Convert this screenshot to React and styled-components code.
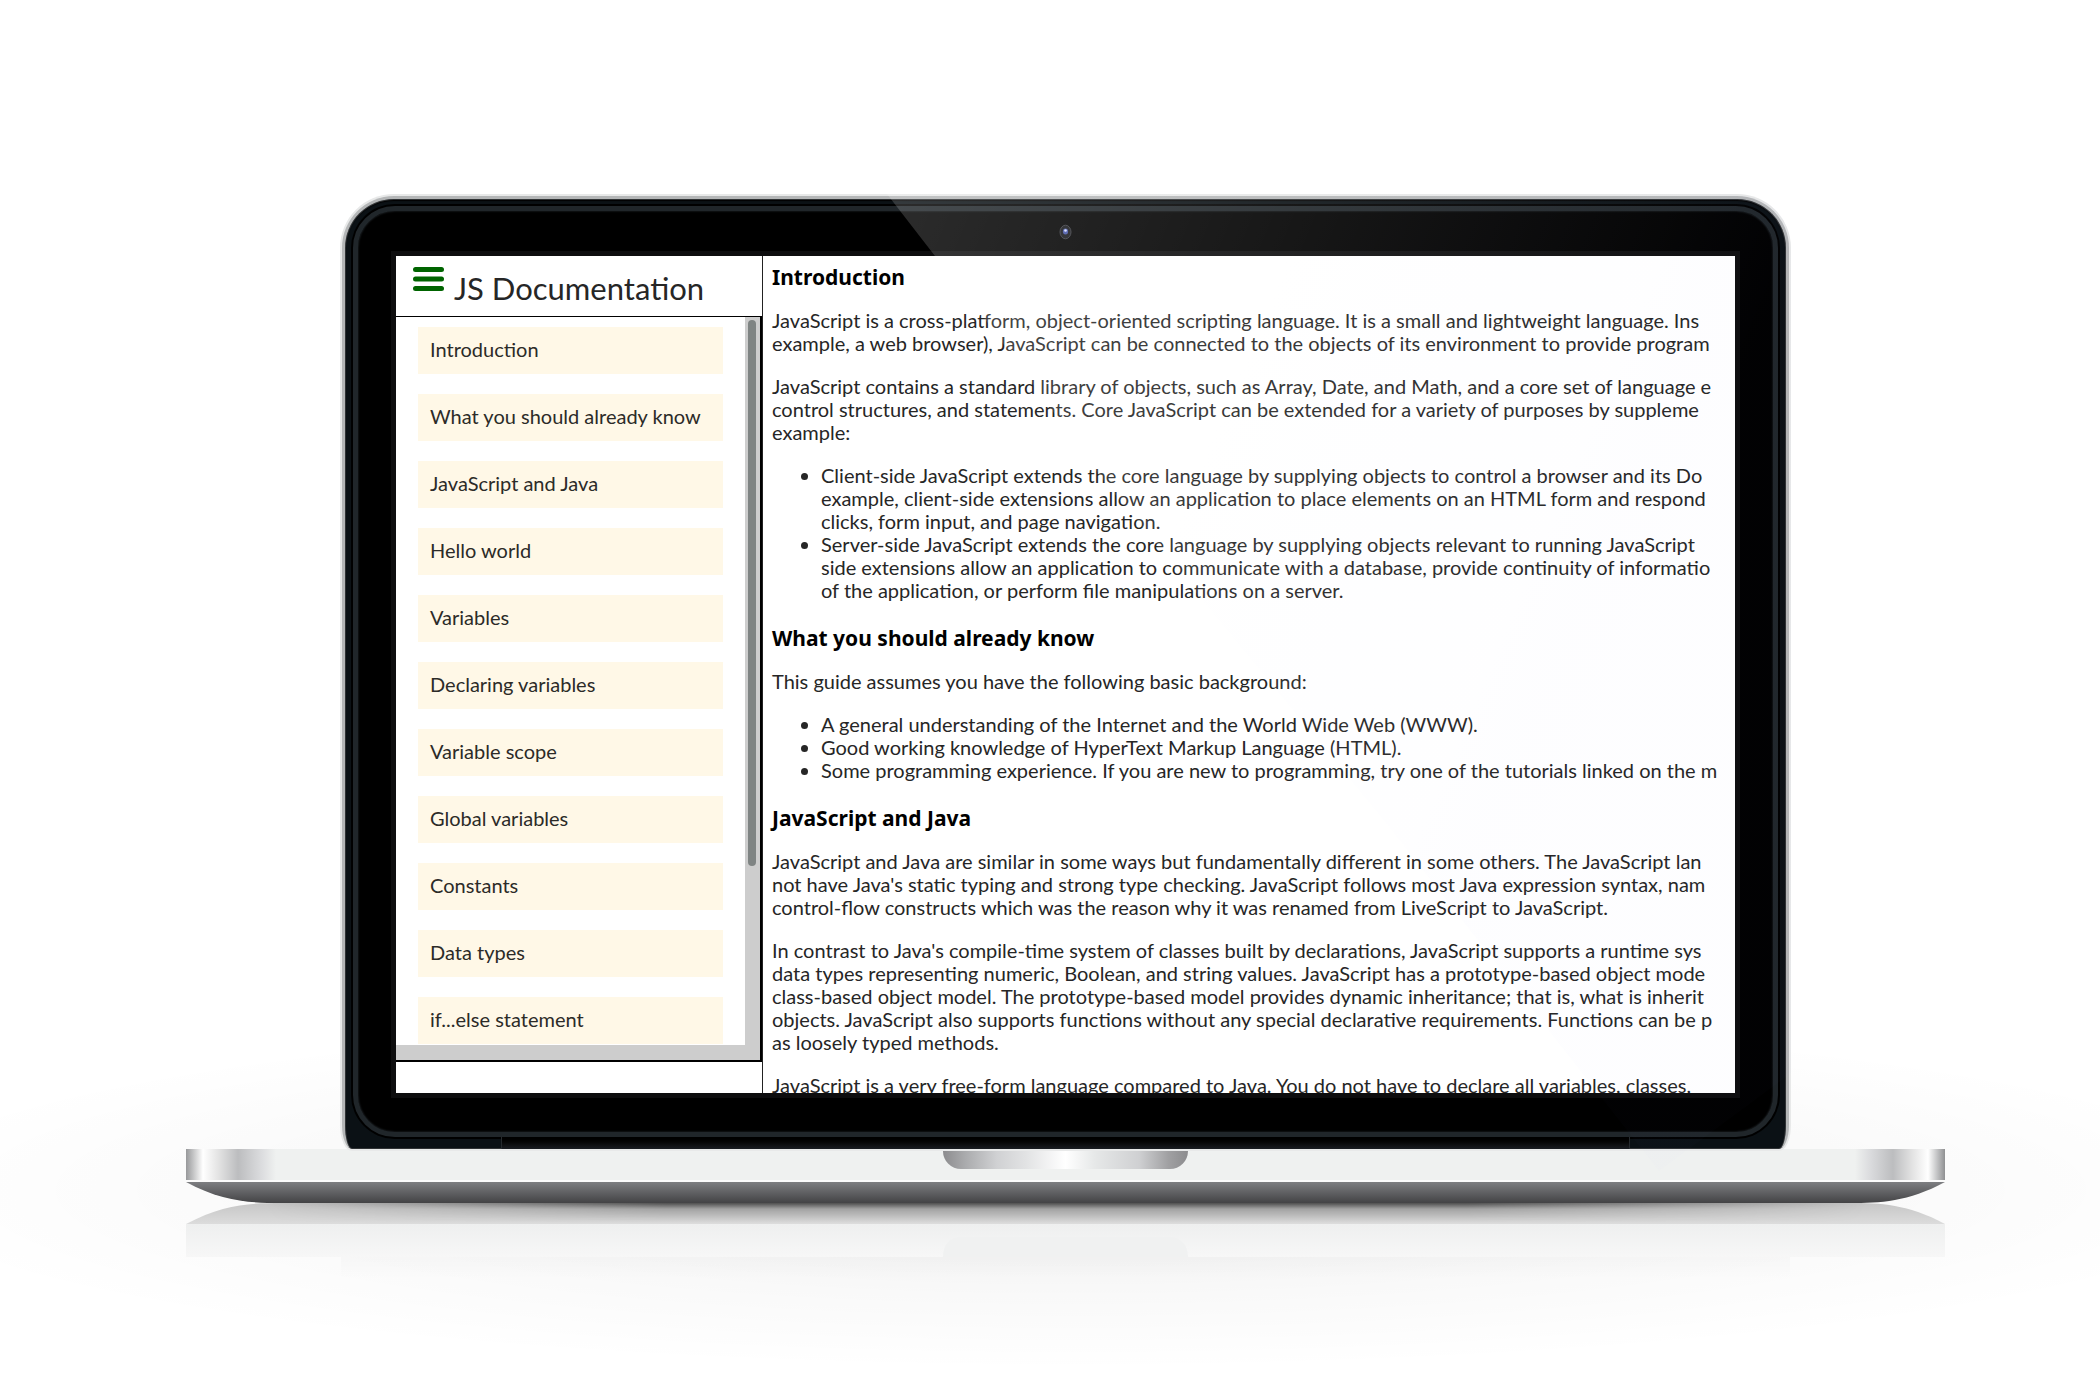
import React from "react";
import styled, { createGlobalStyle } from "styled-components";

const GlobalStyle = createGlobalStyle`
  *, *::before, *::after { box-sizing: border-box; }
  html { height: 100%; background: #fff; }
  body { margin: 0; min-height: 100%; overflow: hidden; }
`;

const bodyFont = `Lato, "Open Sans", sans-serif`;
const headingFont = `"Noto Sans", "Open Sans", sans-serif`;

const Stage = styled.main`
  min-height: 100vh;
  padding: 196px 155px 0 186px;
  color: #262626;
  font-family: ${bodyFont};
  background:
    radial-gradient(ellipse 58% 180px at 51% 1190px, rgba(0, 0, 0, 0.07), rgba(0, 0, 0, 0.025) 60%, rgba(0, 0, 0, 0) 100%),
    #fff;
`;

const Laptop = styled.div`
  display: flex;
  flex-direction: column;
`;

const Lid = styled.div`
  position: relative;
  margin: 0 156px;
  padding: 7px 8px 0;
  border: 3px solid #b4b6b7;
  border-bottom: 0;
  border-radius: 52px 52px 10px 10px / 52px 52px 24px 24px;
  background: #0b1115;
  box-shadow: inset 0 0 0 1px #303335, inset 0 2px 1px #000, 0 0 0 2px #e8e9e9;
`;

const Bezel = styled.div`
  padding: 45px 38px 39px;
  border: 5px solid #20262a;
  border-radius: 42px;
  background: #000;
  box-shadow: 0 0 0 2px #000, inset 0 0 2px #30373c;
`;

const Display = styled.div`
  display: flex;
  aspect-ratio: 16 / 10;
  overflow: hidden;
  background: #fff;
  box-shadow: 0 0 0 5px #0d0d0e;
`;

const Camera = styled.svg`
  position: absolute;
  top: 25px;
  left: calc(50% - 7px);
`;

const Glare = styled.svg`
  position: absolute;
  top: -5px;
  left: -5px;
  width: calc(100% + 10px);
  height: calc(100% + 27px);
  pointer-events: none;
  z-index: 2;
`;

const Hinge = styled.div`
  height: 12px;
  margin: 0 148px;
  border: solid #262a2e;
  border-width: 0 1px;
  background: linear-gradient(#000 2px, #060606 5px, #1a1d22);
`;

const Sidebar = styled.aside`
  display: flex;
  flex: 0 0 367px;
  flex-direction: column;
  padding-bottom: 31px;
  border-right: 1px solid #222;
`;

const SidebarHeader = styled.header`
  display: flex;
  flex: 0 0 61px;
  gap: 10px;
  padding: 7px 16px 0;
  border-bottom: 1px solid #000;
`;

const MenuButton = styled.button`
  width: 32px;
  height: 32px;
  padding: 3px 0;
  border: 0;
  background: none;
  cursor: pointer;

  svg { display: block; }
`;

const Title = styled.h1`
  margin: 0;
  font-size: 31px;
  font-weight: 400;
  line-height: 50px;
`;

const ScrollBox = styled.div`
  display: grid;
  flex: 1;
  grid-template: minmax(0, 1fr) 15px / minmax(0, 1fr) 15px;
  min-height: 0;
  border: solid #000;
  border-width: 0 2px 2px 0;
  background: #cdcdcd;
`;

const NavList = styled.nav`
  display: flex;
  flex-direction: column;
  gap: 20px;
  overflow: hidden;
  padding: 10px 22px 0;
  background: #fff;
`;

const NavLink = styled.a`
  flex: 0 0 47px;
  padding: 0 12px;
  background: #fff8e7;
  color: #2c2b28;
  font-size: 20px;
  line-height: 45px;
  text-decoration: none;
  white-space: nowrap;
`;

const Thumb = styled.div`
  height: 75%;
  margin: 3px 4px 0 3px;
  border-radius: 4px;
  background: #7f8483;
`;

const Article = styled.article`
  flex: 1;
  min-width: 0;
  overflow: hidden;
  padding: 9px 0 0 9px;
  font-size: 20px;
  line-height: 23px;
  white-space: nowrap;
`;

const Section = styled.section`
  padding-bottom: 4px;
`;

const SectionTitle = styled.h2`
  margin: 0 0 20px;
  color: #000;
  font-family: ${headingFont};
  font-size: 21px;
  font-weight: 700;
  line-height: 24px;
`;

const Paragraph = styled.p`
  margin: 0 0 20px;
`;

const Bullets = styled.ul`
  margin: 0 0 20px;
  padding-left: 49px;
`;

const Base = styled.div`
  display: flex;
  justify-content: center;
  height: 33px;
  border-bottom: 2px solid #fbfbfb;
  background:
    linear-gradient(90deg, #97989a, #fff 17px, #e4e4e4 32px, #bcbdbf 52px, #dcdddf 76px, transparent 90px),
    linear-gradient(270deg, #8f9092, #fff 17px, #e4e4e4 32px, #bcbdbf 52px, #dcdddf 76px, transparent 90px),
    #eff1f0;
`;

const Notch = styled.div`
  width: 245px;
  height: 20px;
  border-radius: 0 0 18px 18px;
  background: linear-gradient(90deg, #8c8c8e, #aaabad 9%, #d0d1d3 22%, #e2e3e4 34%, #fff 50%, #e6e8e8 62%, #cfd0d2 80%, #a0a0a2 92%, #8c8c8e);
`;

const Underside = styled.svg`
  display: block;
  width: 100%;
  height: 120px;
`;

const navItems = [
  "Introduction",
  "What you should already know",
  "JavaScript and Java",
  "Hello world",
  "Variables",
  "Declaring variables",
  "Variable scope",
  "Global variables",
  "Constants",
  "Data types",
  "if...else statement",
];

const slug = (text) => text.replace(/[^A-Za-z]+/g, "_");

const sections = [
  {
    title: "Introduction",
    blocks: [
      [
        "JavaScript is a cross-platform, object-oriented scripting language. It is a small and lightweight language. Ins",
        "example, a web browser), JavaScript can be connected to the objects of its environment to provide program",
      ],
      [
        "JavaScript contains a standard library of objects, such as Array, Date, and Math, and a core set of language e",
        "control structures, and statements. Core JavaScript can be extended for a variety of purposes by suppleme",
        "example:",
      ],
      {
        items: [
          [
            "Client-side JavaScript extends the core language by supplying objects to control a browser and its Do",
            "example, client-side extensions allow an application to place elements on an HTML form and respond",
            "clicks, form input, and page navigation.",
          ],
          [
            "Server-side JavaScript extends the core language by supplying objects relevant to running JavaScript",
            "side extensions allow an application to communicate with a database, provide continuity of informatio",
            "of the application, or perform file manipulations on a server.",
          ],
        ],
      },
    ],
  },
  {
    title: "What you should already know",
    blocks: [
      ["This guide assumes you have the following basic background:"],
      {
        items: [
          ["A general understanding of the Internet and the World Wide Web (WWW)."],
          ["Good working knowledge of HyperText Markup Language (HTML)."],
          ["Some programming experience. If you are new to programming, try one of the tutorials linked on the m"],
        ],
      },
    ],
  },
  {
    title: "JavaScript and Java",
    blocks: [
      [
        "JavaScript and Java are similar in some ways but fundamentally different in some others. The JavaScript lan",
        "not have Java's static typing and strong type checking. JavaScript follows most Java expression syntax, nam",
        "control-flow constructs which was the reason why it was renamed from LiveScript to JavaScript.",
      ],
      [
        "In contrast to Java's compile-time system of classes built by declarations, JavaScript supports a runtime sys",
        "data types representing numeric, Boolean, and string values. JavaScript has a prototype-based object mode",
        "class-based object model. The prototype-based model provides dynamic inheritance; that is, what is inherit",
        "objects. JavaScript also supports functions without any special declarative requirements. Functions can be p",
        "as loosely typed methods.",
      ],
      ["JavaScript is a very free-form language compared to Java. You do not have to declare all variables, classes,"],
    ],
  },
];

const Lines = ({ lines }) =>
  lines.map((line, i) => (
    <React.Fragment key={line}>
      {i > 0 && <br />}
      {line}
    </React.Fragment>
  ));

const Block = ({ block }) =>
  block.items ? (
    <Bullets>
      {block.items.map((item) => (
        <li key={item[0]}>
          <Lines lines={item} />
        </li>
      ))}
    </Bullets>
  ) : (
    <Paragraph>
      <Lines lines={block} />
    </Paragraph>
  );

const MenuIcon = () => (
  <svg width="32" height="26" viewBox="0 0 32 26" fill="#006400" aria-hidden="true">
    <rect x="1" y="1" width="31" height="5" rx="2.5" />
    <rect x="1" y="10.5" width="31" height="5" rx="2.5" />
    <rect x="1" y="20" width="31" height="5" rx="2.5" />
  </svg>
);

const LidGlare = () => (
  <Glare viewBox="0 0 1451 978" preserveAspectRatio="none" aria-hidden="true">
    <defs>
      <linearGradient id="glare" gradientUnits="userSpaceOnUse" x1="560" y1="0" x2="1340" y2="330">
        <stop offset="0" stopColor="#fff" stopOpacity="0.17" />
        <stop offset="0.45" stopColor="#fff" stopOpacity="0.09" />
        <stop offset="0.85" stopColor="#e0e2ff" stopOpacity="0.03" />
        <stop offset="1" stopColor="#8080ff" stopOpacity="0.012" />
      </linearGradient>
    </defs>
    <path d="M547 0H1395Q1451 4 1451 60V880L1319 978L1043 626L763 286L694 192L641 120L595 62Z" fill="url(#glare)" />
  </Glare>
);

const LaptopUnderside = () => (
  <Underside viewBox="0 0 1759 120" preserveAspectRatio="none" aria-hidden="true">
    <defs>
      <linearGradient id="metal" x1="0" y1="0" x2="0" y2="1">
        <stop offset="0" stopColor="#7d7e81" />
        <stop offset="1" stopColor="#434345" />
      </linearGradient>
      <linearGradient id="mirror" x1="0" y1="0" x2="0" y2="1">
        <stop offset="0" stopColor="#c6c6c6" />
        <stop offset="1" stopColor="#dcdcdc" />
      </linearGradient>
      <linearGradient id="mirrorDeck" x1="0" y1="0" x2="0" y2="1">
        <stop offset="0" stopColor="#eeefef" />
        <stop offset="1" stopColor="#f7f7f7" />
      </linearGradient>
      <linearGradient id="mirrorLid" x1="0" y1="0" x2="0" y2="1">
        <stop offset="0" stopColor="#000" stopOpacity="0.018" />
        <stop offset="1" stopColor="#000" stopOpacity="0" />
      </linearGradient>
      <linearGradient id="contact" x1="0" y1="0" x2="0" y2="1">
        <stop offset="0" stopColor="#000" stopOpacity="0.6" />
        <stop offset="0.3" stopColor="#000" stopOpacity="0.2" />
        <stop offset="1" stopColor="#000" stopOpacity="0" />
      </linearGradient>
      <linearGradient id="spread" x1="0" y1="0" x2="1" y2="0">
        <stop offset="0" stopColor="#000" />
        <stop offset="0.25" stopColor="#fff" />
        <stop offset="0.75" stopColor="#fff" />
        <stop offset="1" stopColor="#000" />
      </linearGradient>
      <mask id="spreadMask" maskUnits="userSpaceOnUse" x="80" y="20" width="1600" height="22">
        <rect x="80" y="20" width="1600" height="22" fill="url(#spread)" />
      </mask>
    </defs>
    <path d="M0 42C37 22 65 21 95 21H1664C1694 21 1722 22 1759 42Z" fill="url(#mirror)" />
    <rect y="42" width="1759" height="33" fill="url(#mirrorDeck)" />
    <path d="M757 75C757 62 764 55 775 55H983C994 55 1002 62 1002 75Z" fill="#f0f1f1" />
    <rect x="155" y="75" width="1449" height="22" fill="url(#mirrorLid)" />
    <rect x="80" y="21" width="1600" height="20" fill="url(#contact)" mask="url(#spreadMask)" />
    <path d="M0 0H1759C1722 20 1694 21 1664 21H95C65 21 37 20 0 0Z" fill="url(#metal)" />
  </Underside>
);

export default function App() {
  return (
    <>
      <GlobalStyle />
      <Stage>
        <Laptop>
          <Lid>
            <Camera width="13" height="16" viewBox="0 0 13 16" aria-hidden="true">
              <ellipse cx="6.5" cy="8" rx="5.5" ry="6.8" fill="#17181b" stroke="#3b3c42" strokeWidth="1" />
              <ellipse cx="6.5" cy="7.5" rx="2.6" ry="3" fill="#4757a8" />
              <circle cx="6.5" cy="6.5" r="1.3" fill="#d7dcff" />
            </Camera>
            <Bezel>
              <Display>
                <Sidebar>
                  <SidebarHeader>
                    <MenuButton type="button" aria-label="Toggle navigation">
                      <MenuIcon />
                    </MenuButton>
                    <Title>JS Documentation</Title>
                  </SidebarHeader>
                  <ScrollBox>
                    <NavList>
                      {navItems.map((item) => (
                        <NavLink key={item} href={`#${slug(item)}`}>
                          {item}
                        </NavLink>
                      ))}
                    </NavList>
                    <Thumb />
                  </ScrollBox>
                </Sidebar>
                <Article>
                  {sections.map(({ title, blocks }) => (
                    <Section key={title} id={slug(title)}>
                      <SectionTitle>{title}</SectionTitle>
                      {blocks.map((block, i) => (
                        <Block key={i} block={block} />
                      ))}
                    </Section>
                  ))}
                </Article>
              </Display>
            </Bezel>
            <Hinge />
            <LidGlare />
          </Lid>
          <Base>
            <Notch />
          </Base>
          <LaptopUnderside />
        </Laptop>
      </Stage>
    </>
  );
}
